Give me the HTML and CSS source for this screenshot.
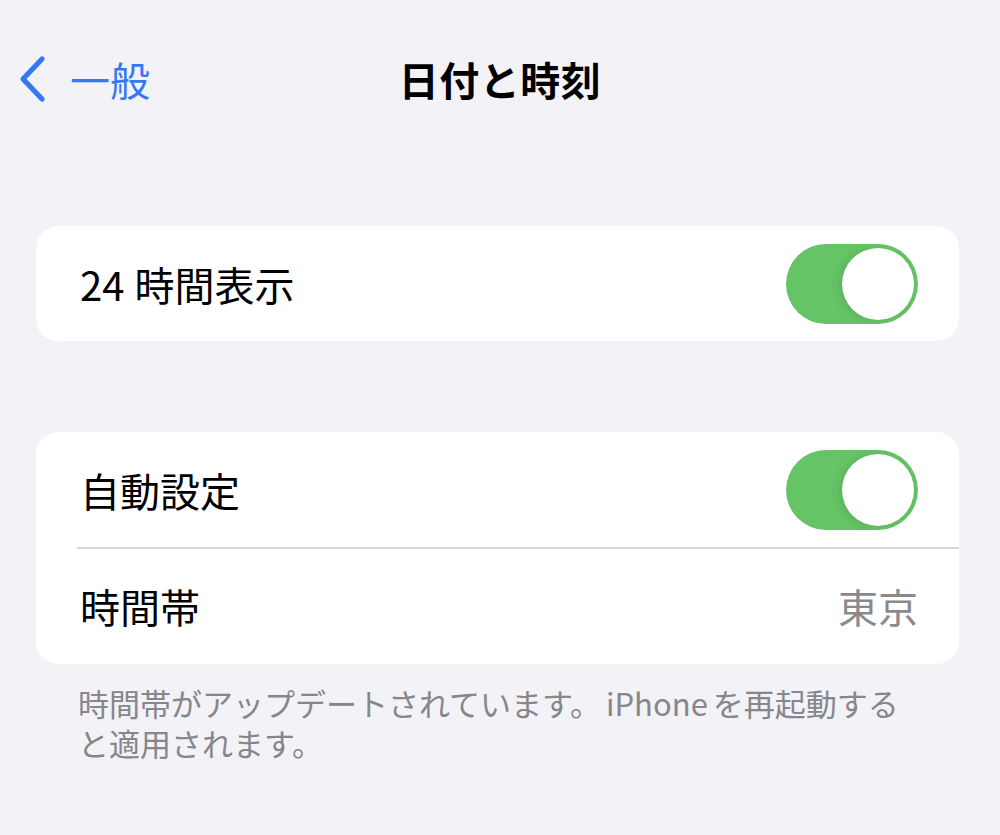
FILE: index.html
```html
<!DOCTYPE html>
<html lang="ja">
<head>
<meta charset="utf-8">
<title>日付と時刻</title>
<link rel="stylesheet" href="styles.css">
</head>
<body>
<header class="nav">
  <a class="back" href="#">
    <svg class="chevron" viewBox="0 0 30 48" width="30" height="48" aria-hidden="true">
      <path d="M25 4 L6 24 L25 44" fill="none" stroke="currentColor" stroke-width="5.2" stroke-linecap="round" stroke-linejoin="round"/>
    </svg>
    <span class="back-label">一般</span>
  </a>
  <h1 class="title">日付と時刻</h1>
  <div class="nav-spacer"></div>
</header>

<main>
  <section class="card card-first">
    <div class="row">
      <span class="label"><span class="num">24</span>時間表示</span>
      <span class="toggle on"><span class="knob"></span></span>
    </div>
  </section>

  <section class="card card-second">
    <div class="row">
      <span class="label">自動設定</span>
      <span class="toggle on"><span class="knob"></span></span>
    </div>
    <div class="separator"></div>
    <div class="row">
      <span class="label">時間帯</span>
      <span class="value">東京</span>
    </div>
  </section>

  <p class="footnote">時間帯がアップデートされています。<span class="gap"></span>iPhone<span class="gap"></span>を再起動する<br>と適用されます。</p>
</main>
</body>
</html>
```

FILE: styles.css
```css
* {
  box-sizing: border-box;
}

html, body {
  margin: 0;
  padding: 0;
}

body {
  background: #f2f2f7;
  width: 1000px;
  height: 835px;
  overflow: hidden;
  font-family: "Noto Sans CJK JP", "Noto Sans", sans-serif;
  color: #000;
}

.nav {
  height: 158px;
  display: grid;
  grid-template-columns: 1fr auto 1fr;
  align-items: center;
}

.back {
  display: flex;
  align-items: center;
  color: #3478f6;
  text-decoration: none;
  padding-left: 17px;
}

.chevron {
  display: block;
  margin-right: 23px;
}

.back-label {
  font-size: 40px;
  line-height: 48px;
  font-weight: 400;
}

.title {
  margin: 0;
  font-size: 40px;
  line-height: 48px;
  font-weight: 700;
  text-align: center;
  letter-spacing: 0.5px;
}

main {
  padding-top: 68px;
}

.card {
  background: #fff;
  border-radius: 22px;
  margin: 0 41px 0 36px;
  overflow: hidden;
}

.card-second {
  margin-top: 91px;
}

.row {
  height: 115px;
  display: flex;
  align-items: center;
  justify-content: space-between;
  padding: 0 41px 0 44px;
}

.label {
  font-size: 40px;
  line-height: 48px;
}

.num {
  margin-right: 10px;
}

.value {
  font-size: 40px;
  line-height: 48px;
  color: #8a8a8e;
}

.separator {
  height: 1.5px;
  background: #d8d8dc;
  margin-left: 41px;
}

.toggle {
  width: 132px;
  height: 80px;
  border-radius: 40px;
  background: #65c466;
  position: relative;
  flex: none;
}

.knob {
  position: absolute;
  top: 4px;
  right: 4px;
  width: 72px;
  height: 72px;
  border-radius: 50%;
  background: #fff;
  box-shadow: -3px 1px 8px rgba(0, 0, 0, 0.10), 0 0 1px rgba(0, 0, 0, 0.06);
}

.footnote {
  margin: 19px 20px 0 78px;
  font-size: 31px;
  line-height: 40px;
  color: #86868b;
  white-space: nowrap;
}

.gap {
  display: inline-block;
  width: 5px;
}
```
